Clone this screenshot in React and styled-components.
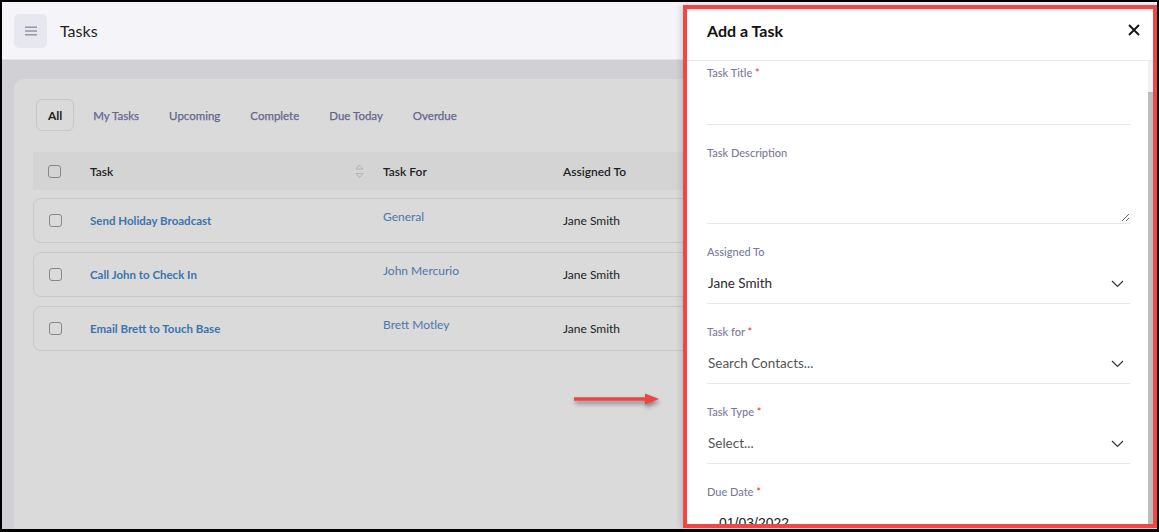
import React from 'react';
import styled, { createGlobalStyle } from 'styled-components';

const GlobalStyle = createGlobalStyle`
  * { box-sizing: border-box; }
  body {
    margin: 0;
    font-family: Lato, "Open Sans", sans-serif;
    background: #000;
  }
`;

const tabs = ['All', 'My Tasks', 'Upcoming', 'Complete', 'Due Today', 'Overdue'];

const tasks = [
  { title: 'Send Holiday Broadcast', taskFor: 'General', assigned: 'Jane Smith' },
  { title: 'Call John to Check In', taskFor: 'John Mercurio', assigned: 'Jane Smith' },
  { title: 'Email Brett to Touch Base', taskFor: 'Brett Motley', assigned: 'Jane Smith' },
];

function Chevron() {
  return (
    <svg width="13" height="8" viewBox="0 0 13 8">
      <polyline points="1,1 6.5,6.5 12,1" fill="none" stroke="#333" strokeWidth="1.2" />
    </svg>
  );
}

function SortIcon() {
  return (
    <svg width="9" height="15" viewBox="0 0 9 15">
      <polygon points="4.5,1 8,5 1,5" fill="none" stroke="#b0b0b0" strokeWidth="0.9" />
      <polygon points="1,9.5 8,9.5 4.5,13.5" fill="none" stroke="#b0b0b0" strokeWidth="0.9" />
    </svg>
  );
}

function SelectField({ label, required, value, placeholder }) {
  return (
    <Field>
      <Label>{label}{required && <Star> *</Star>}</Label>
      <SelectBox>
        <SelectValue $placeholder={placeholder}>{value}</SelectValue>
        <Chevron />
      </SelectBox>
    </Field>
  );
}

export default function App() {
  return (
    <Frame>
      <GlobalStyle />
      <TopBar>
        <MenuBtn type="button">
          <svg width="12" height="10" viewBox="0 0 12 10">
            <rect x="0" y="0.5" width="12" height="1.4" fill="#8d90a3" />
            <rect x="0" y="4.3" width="12" height="1.4" fill="#8d90a3" />
            <rect x="0" y="8.1" width="12" height="1.4" fill="#8d90a3" />
          </svg>
        </MenuBtn>
        <PageTitle>Tasks</PageTitle>
      </TopBar>
      <Main>
        <Card>
          <Tabs>
            {tabs.map((t, i) => (
              <Tab key={t} $active={i === 0}>{t}</Tab>
            ))}
          </Tabs>
          <HeadRow>
            <Check />
            <HeadCell>
              Task
              <SortIcon />
            </HeadCell>
            <HeadCell>Task For</HeadCell>
            <HeadCell>Assigned To</HeadCell>
          </HeadRow>
          <Rows>
            {tasks.map((t) => (
              <Row key={t.title}>
                <Check />
                <TaskLink>{t.title}</TaskLink>
                <ForLink>{t.taskFor}</ForLink>
                <Assignee>{t.assigned}</Assignee>
              </Row>
            ))}
          </Rows>
        </Card>
      </Main>

      <Arrow width="92" height="20" viewBox="0 0 92 20">
        <line x1="1" y1="10" x2="74" y2="10" stroke="#ef4444" strokeWidth="3.4" />
        <polygon points="72,4.5 86,10 72,15.5" fill="#ef4444" />
      </Arrow>

      <Drawer>
        <DrawerHead>
          <DrawerTitle>Add a Task</DrawerTitle>
          <CloseBtn type="button">
            <svg width="12" height="12" viewBox="0 0 12 12">
              <path d="M1 1 L11 11 M11 1 L1 11" stroke="#111" strokeWidth="1.8" />
            </svg>
          </CloseBtn>
        </DrawerHead>
        <DrawerBody>
          <Form>
            <Field>
              <Label>Task Title<Star> *</Star></Label>
              <TextInput />
            </Field>
            <Field>
              <Label>Task Description</Label>
              <TextArea />
            </Field>
            <SelectField label="Assigned To" value="Jane Smith" />
            <SelectField label="Task for" required value="Search Contacts..." placeholder />
            <SelectField label="Task Type" required value="Select..." placeholder />
            <Field>
              <Label>Due Date<Star> *</Star></Label>
              <DateValue>01/03/2022</DateValue>
            </Field>
          </Form>
          <ScrollTrack>
            <ScrollThumb />
          </ScrollTrack>
        </DrawerBody>
      </Drawer>
    </Frame>
  );
}

const Frame = styled.div`
  position: relative;
  width: 1159px;
  height: 532px;
  border: 2px solid #000;
  border-bottom-width: 3px;
  display: flex;
  flex-direction: column;
  overflow: hidden;
  background: #d1d1d5;
`;
const TopBar = styled.header`
  height: 58px;
  flex-shrink: 0;
  display: flex;
  align-items: center;
  gap: 13px;
  padding: 0 0 0 12px;
  background: #f5f5f9;
  border-bottom: 1px solid #e4e4ea;
`;
const MenuBtn = styled.button`
  width: 33px;
  height: 34px;
  border: none;
  border-radius: 5px;
  background: #e7e8ef;
  display: flex;
  align-items: center;
  justify-content: center;
  padding: 0;
`;
const PageTitle = styled.h1`
  margin: 0;
  font-size: 16px;
  font-weight: 400;
  color: #1e1e24;
`;
const Main = styled.main`
  flex: 1;
  padding: 19px 0 0 12px;
  overflow: hidden;
`;
const Card = styled.section`
  height: 500px;
  background: #dadada;
  border-radius: 10px;
  padding: 20px 0 0 19px;
`;
const Tabs = styled.nav`
  display: flex;
  gap: 8px;
  margin-left: 3px;
`;
const Tab = styled.div`
  height: 32px;
  padding: 0 ${(p) => (p.$active ? '11px' : '10px')};
  display: flex;
  align-items: center;
  font-size: ${(p) => (p.$active ? '12px' : '11.5px')};
  font-weight: ${(p) => (p.$active ? 700 : 400)};
  color: ${(p) => (p.$active ? '#1f1f25' : '#67668a')};
  -webkit-text-stroke: ${(p) => (p.$active ? '0' : '0.25px')};
  border: 1px solid ${(p) => (p.$active ? '#c7c7ca' : 'transparent')};
  border-radius: 6px;
`;
const HeadRow = styled.div`
  margin-top: 21px;
  height: 38px;
  display: grid;
  grid-template-columns: 42px 293px 180px 1fr;
  align-items: center;
  background: #d4d4d4;
  padding-left: 15px;
`;
const HeadCell = styled.div`
  display: flex;
  align-items: center;
  justify-content: space-between;
  padding-right: 19px;
  font-size: 12px;
  font-weight: 600;
  color: #1f1f25;
`;
const Check = styled.span`
  width: 13px;
  height: 13px;
  border: 1.4px solid #86868c;
  border-radius: 3px;
  display: block;
`;
const Rows = styled.div`
  margin-top: 8px;
  display: flex;
  flex-direction: column;
  gap: 9px;
`;
const Row = styled.div`
  height: 45px;
  display: grid;
  grid-template-columns: 41px 293px 180px 1fr;
  align-items: center;
  padding-left: 15px;
  border: 1px solid #c9c9cb;
  border-radius: 8px;
`;
const TaskLink = styled.a`
  font-size: 11.5px;
  font-weight: 700;
  color: #3b74ae;
`;
const ForLink = styled.a`
  align-self: start;
  padding-top: 10px;
  font-size: 12px;
  color: #4a77a9;
`;
const Assignee = styled.span`
  font-size: 12px;
  color: #222;
`;
const Arrow = styled.svg`
  position: absolute;
  left: 571px;
  top: 387px;
  filter: drop-shadow(1px 3px 2px rgba(0, 0, 0, 0.4));
`;
const Drawer = styled.aside`
  position: absolute;
  top: 3px;
  right: 0;
  bottom: 1px;
  width: 474px;
  border: 4px solid #ef4646;
  background: #fff;
  display: flex;
  flex-direction: column;
  box-shadow: -2px 0 6px rgba(0, 0, 0, 0.15);
`;
const DrawerHead = styled.div`
  height: 52px;
  flex-shrink: 0;
  display: flex;
  align-items: center;
  justify-content: space-between;
  padding: 0 13px 9px 20px;
  border-bottom: 1px solid #e6e6ea;
  box-shadow: inset 0 3px 3px -2px rgba(0, 0, 0, 0.12);
`;
const DrawerTitle = styled.h2`
  margin: 0;
  font-size: 16px;
  font-weight: 700;
  color: #111;
`;
const CloseBtn = styled.button`
  border: none;
  background: none;
  padding: 0;
  display: flex;
`;
const DrawerBody = styled.div`
  flex: 1;
  display: flex;
  overflow: hidden;
`;
const Form = styled.form`
  flex: 1;
  padding: 4px 18px 0 20px;
  overflow: hidden;
`;
const Field = styled.div`
  margin-bottom: 20px;
`;
const Label = styled.label`
  display: block;
  height: 16px;
  line-height: 16px;
  font-size: 11px;
  font-weight: 500;
  color: #7b7a9c;
`;
const Star = styled.span`
  color: #e53935;
`;
const TextInput = styled.div`
  height: 44px;
  border-bottom: 1px solid #e6e6ea;
`;
const TextArea = styled.div`
  position: relative;
  height: 63px;
  border-bottom: 1px solid #e6e6ea;
  &::after {
    content: '';
    position: absolute;
    right: 1px;
    bottom: 2px;
    width: 7px;
    height: 7px;
    background: linear-gradient(135deg, transparent 45%, #666 45%, #666 55%, transparent 55%, transparent 75%, #666 75%, #666 85%, transparent 85%);
  }
`;
const SelectBox = styled.div`
  height: 44px;
  display: flex;
  align-items: flex-start;
  justify-content: space-between;
  padding: 14px 6px 0 1px;
  border-bottom: 1px solid #e6e6ea;
  svg { margin-top: 6px; }
`;
const SelectValue = styled.span`
  font-size: 13.5px;
  line-height: 18px;
  color: ${(p) => (p.$placeholder ? '#555' : '#2a2a2a')};
`;
const DateValue = styled.div`
  padding: 14px 0 0 12px;
  font-family: "Liberation Sans", Arial, sans-serif;
  font-size: 14px;
  line-height: 18px;
  color: #222;
`;
const ScrollTrack = styled.div`
  width: 5px;
  background: #f1f1f1;
  display: flex;
  flex-direction: column;
`;
const ScrollThumb = styled.div`
  flex: 1;
  margin-top: 31px;
  background: #bdbdbd;
`;
